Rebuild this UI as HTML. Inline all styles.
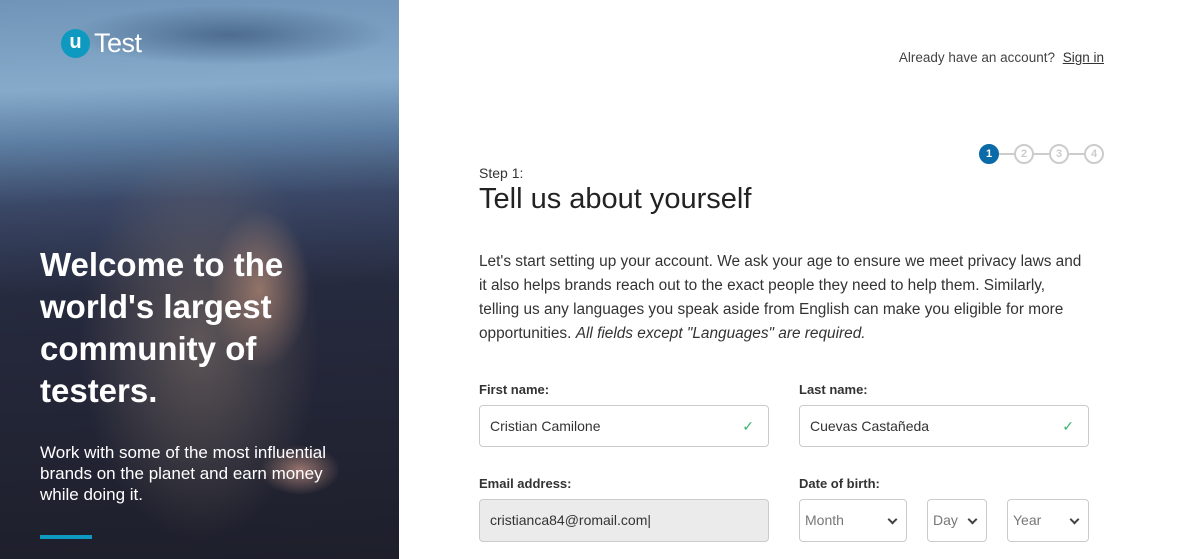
<!DOCTYPE html>
<html><head><style>
*{margin:0;padding:0;box-sizing:border-box}
body{width:1200px;height:559px;overflow:hidden;font-family:"Liberation Sans",sans-serif;background:#fff;position:relative}
.left{position:absolute;left:0;top:0;width:399px;height:559px;overflow:hidden;
background:
radial-gradient(ellipse 50px 80px at 260px 290px,rgba(215,160,130,.55),transparent),
radial-gradient(ellipse 120px 200px at 200px 340px,rgba(150,130,115,.5),transparent),
radial-gradient(ellipse 40px 25px at 300px 470px,rgba(230,170,150,.6),transparent),
radial-gradient(ellipse 160px 30px at 230px 35px,rgba(40,65,100,.55),transparent),
linear-gradient(178deg,#6f94b8 0%,#86abca 16%,#5d7fa3 25%,#3a4766 36%,#262a3e 52%,#1e1f2b 100%)}
.logo{position:absolute;left:61px;top:28px;display:flex;align-items:center}
.logo .u{width:29px;height:29px;border-radius:50%;background:#0e9ac0;color:#fff;font-weight:bold;font-size:20px;text-align:center;line-height:27px}
.logo .t{color:#fff;font-size:27px;margin-left:4px;letter-spacing:-0.5px}
h1{position:absolute;left:40px;top:244px;color:#fff;font-size:33px;line-height:42px;font-weight:bold;width:330px}
.sub{position:absolute;left:40px;top:442px;color:#fff;font-size:17px;line-height:21px;width:315px}
.bar{position:absolute;left:40px;top:535px;width:52px;height:4px;background:#0e9ac0}
.signin{position:absolute;right:96px;top:50px;font-size:13.5px;color:#444}
.signin a{color:#333;text-decoration:underline;margin-left:4px}
.steps{position:absolute;left:979px;top:144px;display:flex;align-items:center}
.c{width:20px;height:20px;border-radius:50%;border:2px solid #ccc;color:#ccc;font-size:11px;font-weight:bold;text-align:center;line-height:16px}
.c.a{background:#0b6aa8;border-color:#0b6aa8;color:#fff}
.ln{width:15px;height:2px;background:#ccc}
.step{position:absolute;left:479px;top:165px;font-size:14px;color:#333}
h2{position:absolute;left:479px;top:183px;font-size:29px;font-weight:normal;color:#222}
.p{position:absolute;left:479px;top:250px;width:660px;font-size:15.4px;line-height:24px;color:#333;white-space:nowrap}
label{position:absolute;font-size:13px;font-weight:bold;color:#333}
.in{position:absolute;height:42px;border:1px solid #ccc;border-radius:4px;font-size:14px;color:#333;padding-left:10px;line-height:40px}
.ck{position:absolute;right:14px;top:0;color:#3cb371;font-size:14px}
.sel{position:absolute;top:499px;height:43px;border:1px solid #ccc;border-radius:4px;font-size:14px;color:#777;padding-left:5px;line-height:41px}
.sel:after{content:"";position:absolute;right:10px;top:16px;width:5px;height:5px;border-right:2px solid #444;border-bottom:2px solid #444;transform:rotate(45deg)}
</style></head><body>
<div class="left">
<div class="logo"><div class="u">u</div><div class="t">Test</div></div>
<h1>Welcome to the world's largest community of testers.</h1>
<div class="sub">Work with some of the most influential brands on the planet and earn money while doing it.</div>
<div class="bar"></div>
</div>
<div class="signin">Already have an account? <a>Sign in</a></div>
<div class="steps"><div class="c a">1</div><div class="ln"></div><div class="c">2</div><div class="ln"></div><div class="c">3</div><div class="ln"></div><div class="c">4</div></div>
<div class="step">Step 1:</div>
<h2>Tell us about yourself</h2>
<div class="p">Let's start setting up your account. We ask your age to ensure we meet privacy laws and<br>it also helps brands reach out to the exact people they need to help them. Similarly,<br>telling us any languages you speak aside from English can make you eligible for more<br>opportunities. <i>All fields except "Languages" are required.</i></div>
<label style="left:479px;top:382px">First name:</label>
<label style="left:799px;top:382px">Last name:</label>
<div class="in" style="left:479px;top:405px;width:290px">Cristian Camilone<span class="ck">✓</span></div>
<div class="in" style="left:799px;top:405px;width:290px">Cuevas Castañeda<span class="ck">✓</span></div>
<label style="left:479px;top:476px">Email address:</label>
<label style="left:799px;top:476px">Date of birth:</label>
<div class="in" style="left:479px;top:499px;width:290px;height:43px;background:#ebebeb">cristianca84@romail.com|</div>
<div class="sel" style="left:799px;width:108px">Month</div>
<div class="sel" style="left:927px;width:60px">Day</div>
<div class="sel" style="left:1007px;width:82px">Year</div>
</body></html>
